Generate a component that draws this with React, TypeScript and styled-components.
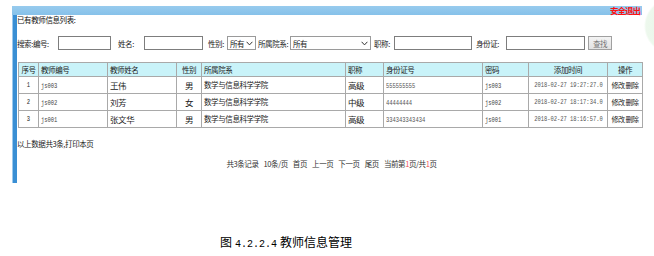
import React from "react";
import styled, { createGlobalStyle } from "styled-components";

const Global = createGlobalStyle`
  html, body { margin: 0; padding: 0; }
  body {
    width: 654px;
    height: 256px;
    overflow: hidden;
    background:
      radial-gradient(circle at 672px 26px, #e6f5e6 0, #edf8ed 26px, rgba(255,255,255,0) 28px),
      #ffffff;
    font-family: "Noto Sans CJK SC", "Noto Sans", sans-serif;
    color: #222;
  }
`;

const Page = styled.div`
  padding-top: 6px;
`;

const Frame = styled.div`
  margin-left: 12px;
  width: 630px;
`;

const TopBar = styled.div`
  height: 9px;
  background: linear-gradient(#97cbee, #86c1e9);
  display: flex;
  justify-content: flex-end;
  align-items: center;
`;

const Logout = styled.span`
  color: #ff1010;
  font-size: 8.5px;
  line-height: 9px;
  letter-spacing: -1px;
  font-weight: 700;
  padding-right: 2px;
`;

const Panel = styled.div`
  margin-left: 1px;
  height: 168px;
  border-left: 4px solid #3a8fd4;
  box-shadow: -1px 0 0 #9ccaee;
  display: flex;
  flex-direction: column;
`;

const Title = styled.div`
  font-size: 7.5px;
  line-height: 10px;
  letter-spacing: -0.4px;
  height: 10px;
  color: #111;
`;

const SearchRow = styled.div`
  margin-top: 11px;
  height: 14px;
  display: flex;
  align-items: center;
`;

const Label = styled.span<{ $w: number; $ml?: number }>`
  width: ${(p) => p.$w}px;
  margin-left: ${(p) => p.$ml ?? 0}px;
  font-size: 7.5px;
  letter-spacing: -0.4px;
  white-space: nowrap;
  flex: none;
`;

const TextBox = styled.input<{ $w: number }>`
  box-sizing: border-box;
  width: ${(p) => p.$w}px;
  height: 14px;
  border: 1px solid #7d7d7d;
  padding: 0;
  margin: 0;
  background: #fff;
  flex: none;
  outline: none;
`;

const SelectBox = styled.div<{ $w: number }>`
  box-sizing: border-box;
  width: ${(p) => p.$w}px;
  height: 14px;
  border: 1px solid #9a9a9a;
  background: #fff;
  display: flex;
  align-items: center;
  justify-content: space-between;
  padding: 0 2px 0 2px;
  font-size: 7.5px;
  letter-spacing: -0.4px;
  flex: none;
`;

const Chevron = () => (
  <svg width="7" height="5" viewBox="0 0 7 5">
    <path d="M0.6 0.8 L3.5 3.9 L6.4 0.8" fill="none" stroke="#333" strokeWidth="1" />
  </svg>
);

const FindButton = styled.button<{ $ml: number }>`
  box-sizing: border-box;
  margin: 0 0 0 ${(p) => p.$ml}px;
  width: 24px;
  height: 14px;
  padding: 0;
  border: 1px solid #a0a0a0;
  background: linear-gradient(#f4f4f4, #e2e2e2);
  color: #777;
  font-family: inherit;
  font-size: 7.5px;
  letter-spacing: -0.4px;
  flex: none;
`;

const Table = styled.table`
  margin-top: 12px;
  margin-left: 1px;
  width: 624px;
  border-collapse: collapse;
  table-layout: fixed;
`;

const Col = styled.col<{ $w: number }>`
  width: ${(p) => p.$w}px;
`;

const HeadRow = styled.tr`
  height: 14px;
  background: #c9f3f9;
`;

const BodyRow = styled.tr`
  height: 17px;
`;

const Cell = styled.td<{ $align?: string; $big?: boolean; $tight?: boolean }>`
  border: 1px solid #a9a9a9;
  padding: 0 ${(p) => (p.$tight ? 0 : 2)}px;
  text-align: ${(p) => p.$align ?? "left"};
  font-size: ${(p) => (p.$big ? "8.5px" : p.$tight ? "7px" : "7.5px")};
  letter-spacing: ${(p) => (p.$tight ? "-0.5px" : "-0.4px")};
  white-space: nowrap;
  overflow: hidden;
  line-height: 10px;
  font-weight: 400;
  color: #1a1a1a;
`;

const Center = styled.div`
  display: flex;
  justify-content: center;
`;

const Mono = styled.span<{ $origin?: string; $tone?: string }>`
  display: inline-block;
  flex: none;
  font-family: "Liberation Mono", monospace;
  font-size: 8px;
  letter-spacing: 0;
  color: ${(p) => p.$tone ?? "#444"};
  transform: scaleX(0.68);
  transform-origin: ${(p) => p.$origin ?? "left"} center;
`;

const Note = styled.div`
  margin-top: 11px;
  font-size: 7.5px;
  line-height: 10px;
  letter-spacing: -0.4px;
`;

const Pager = styled.div`
  margin-top: 10px;
  display: flex;
  justify-content: center;
  gap: 5px;
  font-size: 7.5px;
  line-height: 10px;
  letter-spacing: -0.4px;
  color: #333;
  padding-left: 4px;
`;

const Red = styled.span`
  color: #f05050;
`;

const Caption = styled.div`
  margin-top: 52px;
  padding-left: 220px;
  font-size: 12px;
  line-height: 14px;
  color: #000;
  white-space: nowrap;
`;

const CapNum = styled.span`
  font-family: "Liberation Mono", monospace;
  font-size: 10px;
  margin: 0 3px;
`;

const cols = [20, 69, 69, 25, 144, 38, 99, 46, 79, 35];

const heads: { t: string; a?: string }[] = [
  { t: "序号", a: "center" },
  { t: "教师编号" },
  { t: "教师姓名" },
  { t: "性别", a: "center" },
  { t: "所属院系" },
  { t: "职称" },
  { t: "身份证号" },
  { t: "密码" },
  { t: "添加时间", a: "center" },
  { t: "操作", a: "center" },
];

const rows = [
  { n: "1", id: "js003", name: "王伟", sex: "男", dept: "数学与信息科学学院", title: "高级", card: "555555555", pwd: "js003", time: "2018-02-27 19:27:27.0" },
  { n: "2", id: "js002", name: "刘芳", sex: "女", dept: "数学与信息科学学院", title: "中级", card: "44444444", pwd: "js002", time: "2018-02-27 18:17:34.0" },
  { n: "3", id: "js001", name: "张文华", sex: "男", dept: "数学与信息科学学院", title: "高级", card: "334343343434", pwd: "js001", time: "2018-02-27 18:16:57.0" },
];

export default function App() {
  return (
    <>
      <Global />
      <Page>
        <Frame>
          <TopBar>
            <Logout>安全退出</Logout>
          </TopBar>
          <Panel>
            <Title>已有教师信息列表:</Title>
            <SearchRow>
              <Label $w={41}>搜索:编号:</Label>
              <TextBox $w={53} />
              <Label $w={26} $ml={7}>姓名:</Label>
              <TextBox $w={59} />
              <Label $w={19} $ml={5}>性别:</Label>
              <SelectBox $w={29}>
                所有
                <Chevron />
              </SelectBox>
              <Label $w={32} $ml={2}>所属院系:</Label>
              <SelectBox $w={81}>
                所有
                <Chevron />
              </SelectBox>
              <Label $w={20} $ml={3}>职称:</Label>
              <TextBox $w={78} />
              <Label $w={30} $ml={4}>身份证:</Label>
              <TextBox $w={79} />
              <FindButton $ml={3}>查找</FindButton>
            </SearchRow>
            <Table>
              <colgroup>
                {cols.map((w, i) => (
                  <Col key={i} $w={w} />
                ))}
              </colgroup>
              <thead>
                <HeadRow>
                  {heads.map((h) => (
                    <Cell as="th" key={h.t} $align={h.a}>
                      {h.t}
                    </Cell>
                  ))}
                </HeadRow>
              </thead>
              <tbody>
                {rows.map((r) => (
                  <BodyRow key={r.n}>
                    <Cell>
                      <Center>
                        <Mono $origin="center" $tone="#222">{r.n}</Mono>
                      </Center>
                    </Cell>
                    <Cell>
                      <Mono>{r.id}</Mono>
                    </Cell>
                    <Cell $big>{r.name}</Cell>
                    <Cell $align="center" $big>{r.sex}</Cell>
                    <Cell>{r.dept}</Cell>
                    <Cell $big>{r.title}</Cell>
                    <Cell>
                      <Mono $tone="#555">{r.card}</Mono>
                    </Cell>
                    <Cell>
                      <Mono>{r.pwd}</Mono>
                    </Cell>
                    <Cell>
                      <Center>
                        <Mono $origin="center" $tone="#555">{r.time}</Mono>
                      </Center>
                    </Cell>
                    <Cell $align="center" $tight>修改 删除</Cell>
                  </BodyRow>
                ))}
              </tbody>
            </Table>
            <Note>以上数据共3条,打印本页</Note>
            <Pager>
              <span>共3条记录</span>
              <span>10条/页</span>
              <span>首页</span>
              <span>上一页</span>
              <span>下一页</span>
              <span>尾页</span>
              <span>
                当前第<Red>1</Red>页/共<Red>1</Red>页
              </span>
            </Pager>
          </Panel>
        </Frame>
        <Caption>
          图<CapNum>4.2.2.4</CapNum>教师信息管理
        </Caption>
      </Page>
    </>
  );
}
